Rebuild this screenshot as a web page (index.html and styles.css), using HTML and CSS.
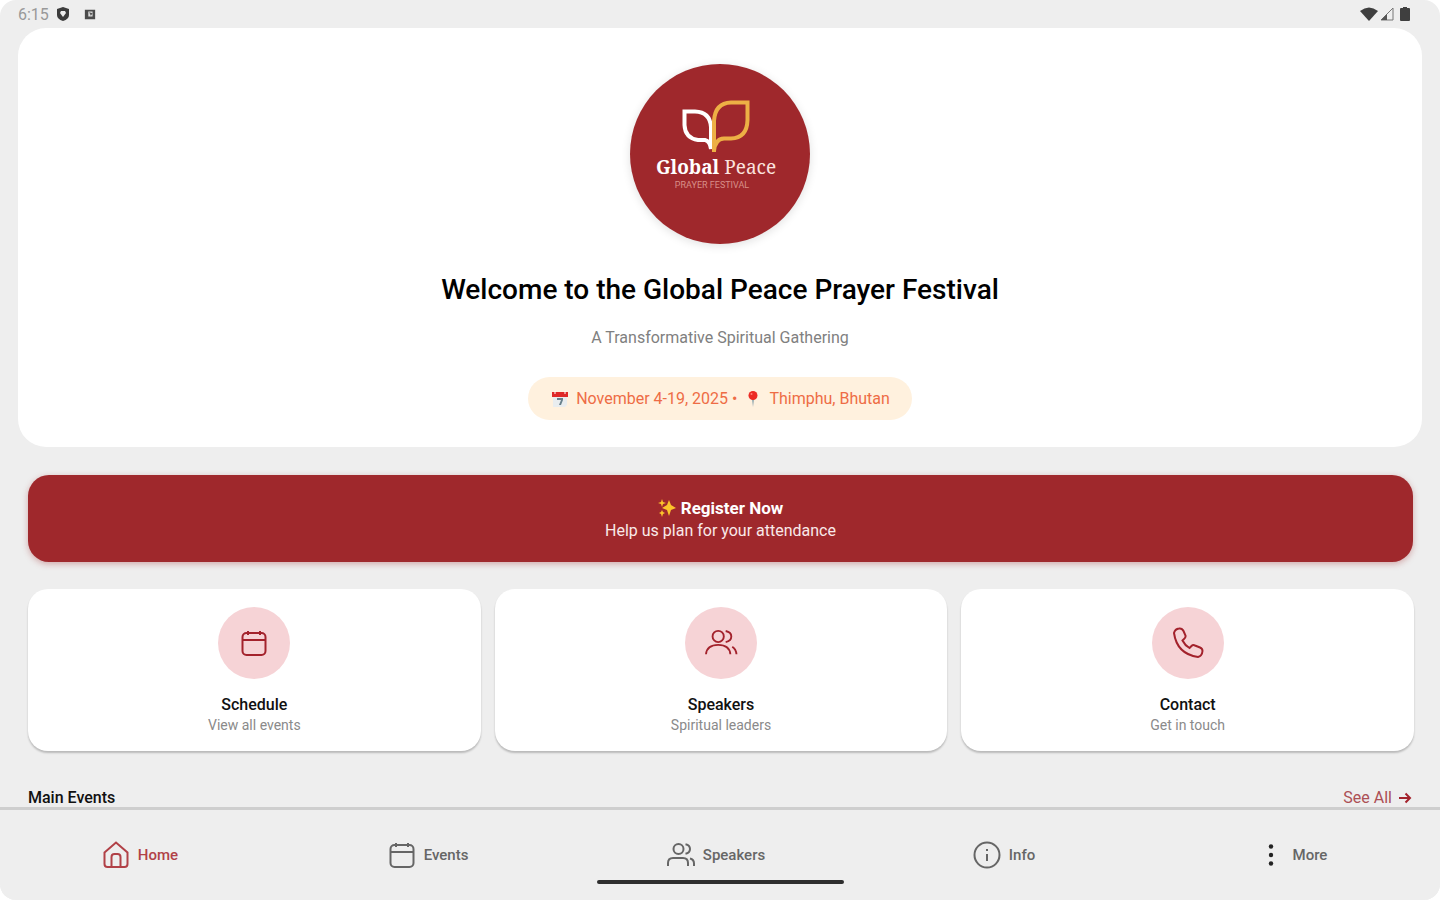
FILE: index.html
```html
<!DOCTYPE html>
<html lang="en">
<head>
<meta charset="utf-8">
<meta name="viewport" content="width=device-width, initial-scale=1">
<title>Global Peace Prayer Festival</title>
<link rel="stylesheet" href="styles.css">
</head>
<body>
<svg class="defs" aria-hidden="true">
  <symbol id="i-calendar" viewBox="0 0 28 28"><rect x="2.5" y="4" width="23" height="22" rx="4"/><path d="M2.5 11h23M8 2v4M20 2v4"/></symbol>
  <symbol id="i-people" viewBox="0 0 28 28"><circle cx="11.5" cy="8" r="5"/><path d="M1 25v-3q0-5 5-5h10q5 0 5 5v3M18.500 3.200q4.500 1 4.500 4.800t-4.500 4.800M23 17.500q4 1 4 5V25"/></symbol>
  <symbol id="i-people-arc" viewBox="0 0 36 32"><circle cx="15" cy="9" r="6"/><path d="M2 28q1-10 13-10t13 10M23 3.200q6 1.200 6 5.800t-6 6M30 20q4 2.500 4.500 8"/></symbol>
  <symbol id="i-home" viewBox="0 0 28 28"><path d="M2.500 11.500 14 1.500l11.500 10V23q0 3-3 3h-17q-3 0-3-3zM9.500 26V16q0-3 3-3h3q3 0 3 3v10"/></symbol>
  <symbol id="i-info" viewBox="0 0 28 28"><circle cx="14" cy="14" r="12.500"/><path d="M14 13v7M14 8v2"/></symbol>
  <symbol id="i-more" viewBox="0 0 28 28"><g fill="#222" stroke="none"><circle cx="14" cy="5.500" r="2.200"/><circle cx="14" cy="14" r="2.200"/><circle cx="14" cy="22.500" r="2.200"/></g></symbol>
  <symbol id="i-phone" viewBox="0 0 32 32"><path d="M2 6Q3 2 7 1.500q3-.5 4.500 2.500l2 4.500q.5 2-1.500 3.500l-1.500 1.500q2.500 5 7 7.500l2-2q1.500-1.500 3.500-.5l5 2q2.500 1 2.500 3.500-.5 5-4.500 6Q5 27 2 6z"/></symbol>
</svg>

<header class="status">
  <span class="status-side"><span class="clock">6:15</span>
    <svg class="status-icon" viewBox="0 0 14 14"><path d="M7 0 13 2v6q0 4-6 6-6-2-6-6V2z" fill="#3c3c3c"/><path d="M5 4h4l1 2-3 4-3-4z" fill="#eee"/></svg>
    <svg class="status-icon status-app" viewBox="0 0 14 14"><path d="M1 2h12v11H1z" fill="#4b4b4b"/><path d="M5 4h5v6H5z" fill="#ddd"/><path d="M6 5l4 1-2 3z" fill="#555"/></svg>
  </span>
  <span class="status-side status-right">
    <svg width="18" height="14" viewBox="0 0 18 14"><path d="M0 4Q9-3 18 4L9 14z" fill="#3f3f3f"/></svg>
    <svg width="14" height="14" viewBox="0 0 14 14"><path d="M1 13 13 1v12z" fill="none" stroke="#777"/><path d="m1 13 6-6v6z" fill="#555"/></svg>
    <svg class="battery" width="10" height="14" viewBox="0 0 10 14"><path d="M3 0h4v1h2q1 0 1 1v11q0 1-1 1H1q-1 0-1-1V2q0-1 1-1h2z" fill="#3f3f3f"/></svg>
  </span>
</header>

<main class="content">
  <section class="hero">
    <div class="logo">
      <svg class="leaves" viewBox="0 0 68 54" aria-hidden="true">
        <path d="M2.500 11.500H13Q28 12 29 27v22Q28 41 23 40H16Q3 38 2.500 25z" fill="none" stroke="#fff" stroke-width="4"/>
        <path d="M32 52V21Q33 3 49 2.500h16.500V20Q65 38 49 38.500H42Q33 39 32 51" fill="none" stroke="#edb045" stroke-width="4"/>
      </svg>
      <span class="logo-name"><b>Global</b> Peace</span>
      <span class="logo-sub">PRAYER FESTIVAL</span>
    </div>
    <h1>Welcome to the Global Peace Prayer Festival</h1>
    <p class="tagline">A Transformative Spiritual Gathering</p>
    <p class="pill">
      <svg class="emoji" viewBox="0 0 16 16" aria-hidden="true"><path d="M1 3h14v11l-2 2H1z" fill="#e9edef"/><path d="M0 1h16v5H0z" fill="#df2928"/><path d="M3 0v3M13 0v3" stroke="#fff"/><path d="M5 7h6v2l-2 5H7l2-5H5z" fill="#68808c"/></svg>
      <span>November 4-19, 2025 •</span>
      <svg class="emoji pin" viewBox="0 0 16 16" aria-hidden="true"><path d="M7 8h2l-1 8z" fill="#8ba3ad"/><circle cx="8" cy="4.500" r="4.500" fill="#ed2b24"/><circle cx="6.500" cy="3" r="1" fill="#ff8178"/></svg>
      <span>Thimphu, Bhutan</span>
    </p>
  </section>

  <button class="register" type="button">
    <span class="register-title"><svg class="sparkle" viewBox="0 0 18 18" aria-hidden="true"><g fill="#fcc42b"><path d="m11 1 2 5 5 3-5 2-2 6-2-6-5-2 5-3z"/><path d="m4 0 1 3 3 1-3 1-1 3-1-3-3-1 3-1zM4 11l1 2 2 1-2 1-1 3-1-3-2-1 2-1z"/></g></svg>Register Now</span>
    <span class="register-sub">Help us plan for your attendance</span>
  </button>

  <section class="cards" aria-label="Quick links">
    <button class="card" type="button"><span class="disc"><svg class="ico"><use href="#i-calendar"/></svg></span><b>Schedule</b><span class="card-sub">View all events</span></button>
    <button class="card" type="button"><span class="disc"><svg class="ico ico-people"><use href="#i-people-arc"/></svg></span><b>Speakers</b><span class="card-sub">Spiritual leaders</span></button>
    <button class="card" type="button"><span class="disc"><svg class="ico ico-phone"><use href="#i-phone"/></svg></span><b>Contact</b><span class="card-sub">Get in touch</span></button>
  </section>

  <div class="section-head">
    <h2>Main Events</h2>
    <a class="see-all" href="#events">See All <svg width="14" height="14" viewBox="0 0 14 14" aria-hidden="true"><path d="M1 7h11M7.500 2.500 12 7l-4.500 4.500"/></svg></a>
  </div>
</main>

<nav class="tabs">
  <div class="tab-row">
    <a class="tab active" href="#home" aria-current="page"><svg class="ico"><use href="#i-home"/></svg>Home</a>
    <a class="tab" href="#events"><svg class="ico"><use href="#i-calendar"/></svg>Events</a>
    <a class="tab" href="#speakers"><svg class="ico"><use href="#i-people"/></svg>Speakers</a>
    <a class="tab" href="#info"><svg class="ico"><use href="#i-info"/></svg>Info</a>
    <a class="tab" href="#more"><svg class="ico"><use href="#i-more"/></svg>More</a>
  </div>
  <div class="gesture-bar"></div>
</nav>
</body>
</html>
```

FILE: styles.css
```css
* { box-sizing: border-box; }
html { background: #fff; }
body {
  margin: 0;
  height: 100vh;
  display: flex;
  flex-direction: column;
  overflow: hidden;
  background: #eee;
  border-radius: 16px;
  font-family: Roboto, "Liberation Sans", sans-serif;
  color: #111;
}
h1, h2, p { margin: 0; }
button { border: 0; font: inherit; color: inherit; cursor: pointer; }
a { text-decoration: none; color: inherit; }
.defs { position: absolute; width: 0; height: 0; }
.ico { width: 28px; height: 28px; fill: none; stroke: currentColor; stroke-width: 2; overflow: visible; flex: none; }
.ico-people { width: 34px; height: 30px; }
.ico-phone { width: 32px; height: 32px; }

.status {
  flex: none;
  height: 28px;
  padding: 0 30px 0 18px;
  display: flex;
  align-items: center;
  justify-content: space-between;
}
.status-side { display: flex; align-items: center; gap: 7px; }
.status-right { gap: 2px; }
.battery { margin-left: 4px; }
.clock { font-size: 16px; color: #999; }
.status-icon { width: 14px; height: 14px; }
.status-app { width: 12px; margin-left: 7px; }

.content { flex: 1; min-height: 0; overflow: hidden; }
.hero {
  margin: 0 18px;
  padding: 36px 24px 27px;
  display: flex;
  flex-direction: column;
  align-items: center;
  background: #fff;
  border-radius: 28px;
}
.logo {
  width: 180px;
  height: 180px;
  padding: 36px 8px 0 0;
  border-radius: 50%;
  background: #9f282c;
  box-shadow: 0 2px 10px rgba(0, 0, 0, .12);
  display: flex;
  flex-direction: column;
  align-items: center;
  color: #fff;
}
.leaves { width: 68px; height: 54px; }
.logo-name { margin-top: 1px; font: 19px/24px "Noto Serif", "Liberation Serif", serif; white-space: nowrap; color: #fbe3df; }
.logo-name b { color: #fff; }
.logo-sub { padding-right: 8px; font-size: 9px; line-height: 12px; color: #d98f88; }
h1 { margin-top: 28px; font-size: 28px; line-height: 36px; font-weight: 500; color: #000; text-align: center; }
.tagline { margin-top: 20px; font-size: 16px; line-height: 20px; color: #808080; }
.pill {
  margin-top: 29px;
  padding: 0 22px 0 24px;
  min-height: 43px;
  display: flex;
  align-items: center;
  gap: 8px;
  border-radius: 22px;
  background: #fff1de;
  color: #ee6c45;
  font-size: 16px;
  line-height: 24px;
}
.emoji { width: 16px; height: 16px; }

.register {
  display: flex;
  flex-direction: column;
  align-items: center;
  width: calc(100% - 55px);
  margin: 28px 27px 0 28px;
  padding: 22px 16px 19px;
  border-radius: 21px;
  background: #9f282c;
  color: #fff;
  box-shadow: 0 2px 6px rgba(159, 40, 44, .35);
}
.register-title { display: flex; align-items: center; gap: 5px; font-size: 17px; line-height: 22px; font-weight: 700; }
.register-sub { font-size: 16px; line-height: 24px; color: #f9e9e9; }
.sparkle { width: 18px; height: 18px; }

.cards { display: grid; grid-template-columns: repeat(3, 1fr); gap: 14px; margin: 27px 26px 0 28px; }
.card {
  display: flex;
  flex-direction: column;
  align-items: center;
  padding: 18px 16px 16px;
  border-radius: 20px;
  background: #fff;
  box-shadow: 0 2px 2px rgba(0, 0, 0, .22);
}
.disc {
  width: 72px;
  height: 72px;
  margin-bottom: 16px;
  border-radius: 50%;
  background: #f6d3d6;
  color: #a3222c;
  display: grid;
  place-items: center;
}
.card b { font-size: 16px; line-height: 20px; font-weight: 500; }
.card-sub { font-size: 14px; line-height: 20px; color: #8a8a8a; }

.section-head { display: flex; justify-content: space-between; align-items: center; margin: 36px 28px 0; line-height: 22px; }
h2 { font-size: 16px; font-weight: 500; }
.see-all { display: flex; align-items: center; gap: 6px; font-size: 16px; color: #ac5055; }
.see-all svg { fill: none; stroke: #a3222c; stroke-width: 2; }

.tabs { flex: none; padding: 29px 0 16px; border-top: 3px solid #cecece; background: #eee; }
.tab-row { display: grid; grid-template-columns: repeat(5, 1fr); }
.tab { display: flex; align-items: center; justify-content: center; gap: 8px; height: 32px; padding-right: 8px; font-size: 15px; font-weight: 500; color: #666; }
.tab.active { color: #b14147; }
.gesture-bar { width: 247px; height: 4px; margin: 9px auto 0; border-radius: 2px; background: #2e2e2e; }
```
